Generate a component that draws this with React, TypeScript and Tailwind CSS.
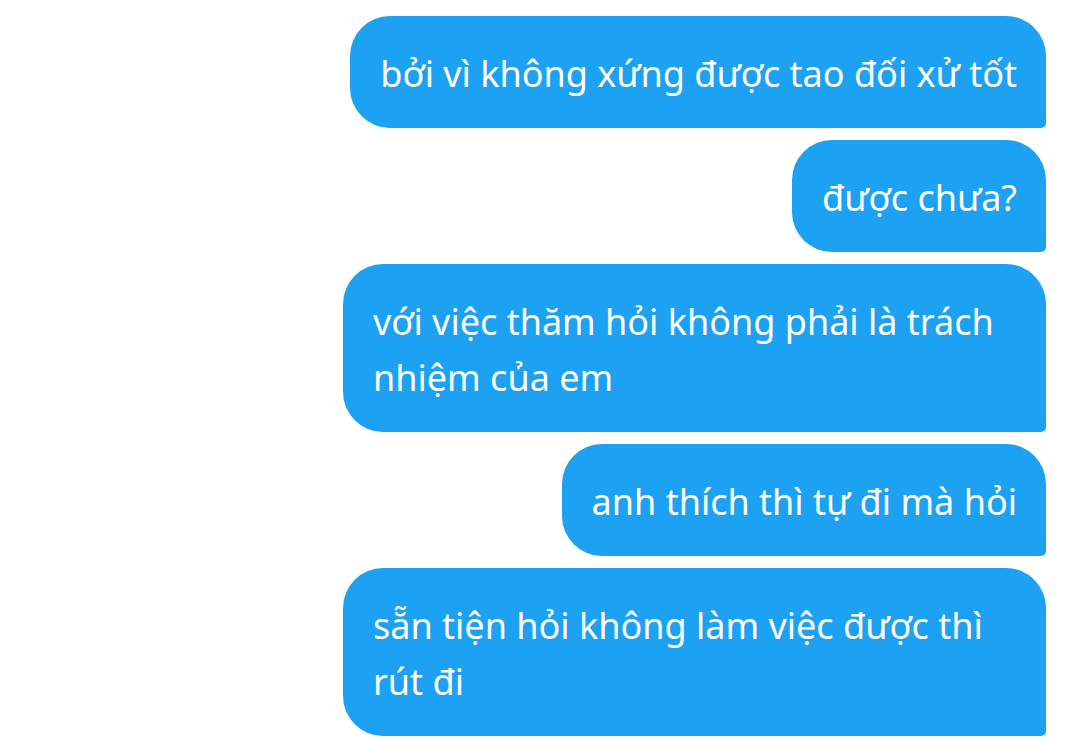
const MESSAGES: string[] = [
  "bởi vì không xứng được tao đối xử tốt",
  "được chưa?",
  "với việc thăm hỏi không phải là trách nhiệm của em",
  "anh thích thì tự đi mà hỏi",
  "sẵn tiện hỏi không làm việc được thì rút đi",
];

export default function App() {
  return (
    <div className="min-h-[739px] w-full bg-white pt-4 pr-[34px]">
      <div className="flex flex-col items-end gap-3">
        {MESSAGES.map((text, i) => (
          <div
            key={i}
            className="max-w-[703px] rounded-[40px] rounded-br-[5px] bg-[#1da1f2] pt-[30px] pb-[26px] pr-[29px] pl-[30px] text-[36px] leading-[56px] text-white"
            style={{ fontFamily: '"Noto Sans", sans-serif' }}
          >
            {text}
          </div>
        ))}
      </div>
    </div>
  );
}
